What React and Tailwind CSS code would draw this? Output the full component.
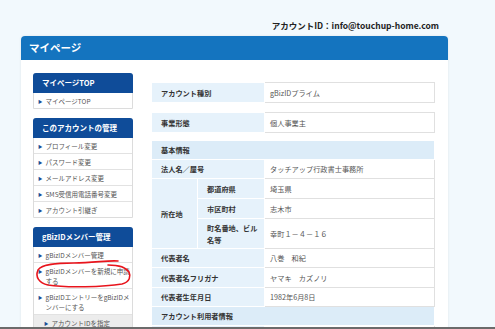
import React from 'react';

const font = { fontFamily: '"Noto Sans CJK JP", "Noto Sans", sans-serif' };

function SideBox({ title, children, className = '' }) {
  return (
    <div className={`border border-[#dcdcdc] rounded-t-[3px] ${className}`}>
      <div className="h-[20px] -mx-px -mt-px bg-[#0f4c99] rounded-t-[3px] flex items-center pl-[9px] text-white font-bold text-[7.5px]">
        {title}
      </div>
      {children}
    </div>
  );
}

function SideItem({ children, last, sub }) {
  return (
    <div
      className={`flex items-start gap-[3px] pr-[2px] py-[2.5px] text-[6.5px] leading-[10px] text-[#555] ${
        last ? '' : 'border-b border-[#e2e2e2]'
      } ${sub ? 'bg-[#ececec] pl-[10px]' : 'pl-[4px]'}`}
    >
      <span className="text-[#1d4f95] text-[4.5px] leading-[10px] shrink-0">▶</span>
      <span>{children}</span>
    </div>
  );
}

function Label({ children, colSpan, rowSpan, className = '' }) {
  return (
    <td
      colSpan={colSpan}
      rowSpan={rowSpan}
      className={`bg-[#e6f2fb] border border-white font-bold text-[#333] pl-[9px] p-0 ${className}`}
    >
      {children}
    </td>
  );
}

function Value({ children }) {
  return <td className="bg-white border border-[#e0e0e0] text-[#555] pl-[5px] p-0">{children}</td>;
}

export default function App() {
  return (
    <div className="w-[495px] h-[329px] bg-[#f2f9fd] overflow-hidden flex flex-col" style={font}>
      <div className="flex-1 overflow-hidden">
        <div className="w-[427px] ml-[21px]">
          {/* account line */}
          <div className="h-[36px] flex items-end justify-end pr-[9px] pb-[4px] text-[8.5px] font-bold text-[#222]">
            アカウントID：info@touchup-home.com
          </div>

          {/* panel */}
          <div className="bg-white shadow-[0_0_3px_rgba(0,0,0,0.08)] rounded-t-[4px] h-[400px]">
            <div className="h-[24px] bg-[#1474bf] rounded-t-[4px] flex items-center pl-[8px] text-white font-bold text-[10.5px]">
              マイページ
            </div>

            <div className="flex pl-[12px] pr-[13px] pt-[13px] gap-[18px]">
              {/* sidebar */}
              <div className="w-[100px] shrink-0 flex flex-col">
                <SideBox title="マイページTOP">
                  <SideItem last>マイページTOP</SideItem>
                </SideBox>
                <SideBox title="このアカウントの管理" className="mt-[9px]">
                  <SideItem>プロフィール変更</SideItem>
                  <SideItem>パスワード変更</SideItem>
                  <SideItem>メールアドレス変更</SideItem>
                  <SideItem>SMS受信用電話番号変更</SideItem>
                  <SideItem last>アカウント引継ぎ</SideItem>
                </SideBox>
                <div className="relative">
                  <SideBox title="gBizIDメンバー管理" className="mt-[9px]">
                    <SideItem>gBizIDメンバー管理</SideItem>
                    <SideItem>
                      gBizIDメンバーを新規に申請
                      <br />
                      する
                    </SideItem>
                    <SideItem>
                      gBizIDエントリーをgBizIDメ
                      <br />
                      ンバーにする
                    </SideItem>
                    <SideItem sub last>アカウントIDを指定</SideItem>
                  </SideBox>
                  {/* red hand-drawn circle */}
                  <svg
                    className="absolute left-[1px] top-[41px] pointer-events-none"
                    width="100"
                    height="32"
                    viewBox="0 0 100 32"
                  >
                    <path
                      d="M84 2 C 74 1, 60 4, 40 4 C 22 4, 8 5, 4 11 C 1 18, 5 24, 14 26 C 32 29, 70 28, 88 25 C 96 23, 97 17, 95 13 C 92 8, 84 6, 74 6"
                      fill="none"
                      stroke="#e8141c"
                      strokeWidth="1.6"
                      strokeLinecap="round"
                    />
                  </svg>
                </div>
              </div>

              {/* content */}
              <div className="w-[284px] pt-[9px] text-[7.2px] leading-[10px]">
                <table className="w-full border-collapse table-fixed">
                  <colgroup>
                    <col className="w-[113px]" />
                    <col />
                  </colgroup>
                  <tbody>
                    <tr className="h-[20px]">
                      <Label>アカウント種別</Label>
                      <Value>gBizIDプライム</Value>
                    </tr>
                  </tbody>
                </table>
                <table className="w-full border-collapse table-fixed mt-[9px]">
                  <colgroup>
                    <col className="w-[113px]" />
                    <col />
                  </colgroup>
                  <tbody>
                    <tr className="h-[20px]">
                      <Label>事業形態</Label>
                      <Value>個人事業主</Value>
                    </tr>
                  </tbody>
                </table>
                <table className="w-full border-collapse mt-[7px] table-fixed">
                  <colgroup>
                    <col className="w-[46px]" />
                    <col className="w-[67px]" />
                    <col />
                  </colgroup>
                  <tbody>
                    <tr className="h-[19px]">
                      <td colSpan={3} className="bg-[#dcecf8] border border-white font-bold text-[#333] pl-[9px] p-0">
                        基本情報
                      </td>
                    </tr>
                    <tr className="h-[19px]">
                      <Label colSpan={2}>法人名／屋号</Label>
                      <Value>タッチアップ行政書士事務所</Value>
                    </tr>
                    <tr className="h-[20px]">
                      <Label rowSpan={3}>所在地</Label>
                      <Label className="pl-[8px]">都道府県</Label>
                      <Value>埼玉県</Value>
                    </tr>
                    <tr className="h-[20px]">
                      <Label className="pl-[8px]">市区町村</Label>
                      <Value>志木市</Value>
                    </tr>
                    <tr className="h-[30px]">
                      <Label className="pl-[8px] pr-[4px] leading-[12px]">町名番地、ビル名等</Label>
                      <Value>幸町１－４－１６</Value>
                    </tr>
                    <tr className="h-[19px]">
                      <Label colSpan={2}>代表者名</Label>
                      <Value>八巻　和紀</Value>
                    </tr>
                    <tr className="h-[20px]">
                      <Label colSpan={2}>代表者名フリガナ</Label>
                      <Value>ヤマキ　カズノリ</Value>
                    </tr>
                    <tr className="h-[19px]">
                      <Label colSpan={2}>代表者生年月日</Label>
                      <Value>1982年6月8日</Value>
                    </tr>
                    <tr className="h-[19px]">
                      <td colSpan={3} className="bg-[#dcecf8] border border-white font-bold text-[#333] pl-[9px] p-0">
                        アカウント利用者情報
                      </td>
                    </tr>
                    <tr className="h-[20px]">
                      <Label colSpan={2}>&nbsp;</Label>
                      <Value>&nbsp;</Value>
                    </tr>
                  </tbody>
                </table>
              </div>
            </div>
          </div>
        </div>
      </div>
      <div className="h-[2px] bg-[#6b6b6b] shrink-0" />
    </div>
  );
}
